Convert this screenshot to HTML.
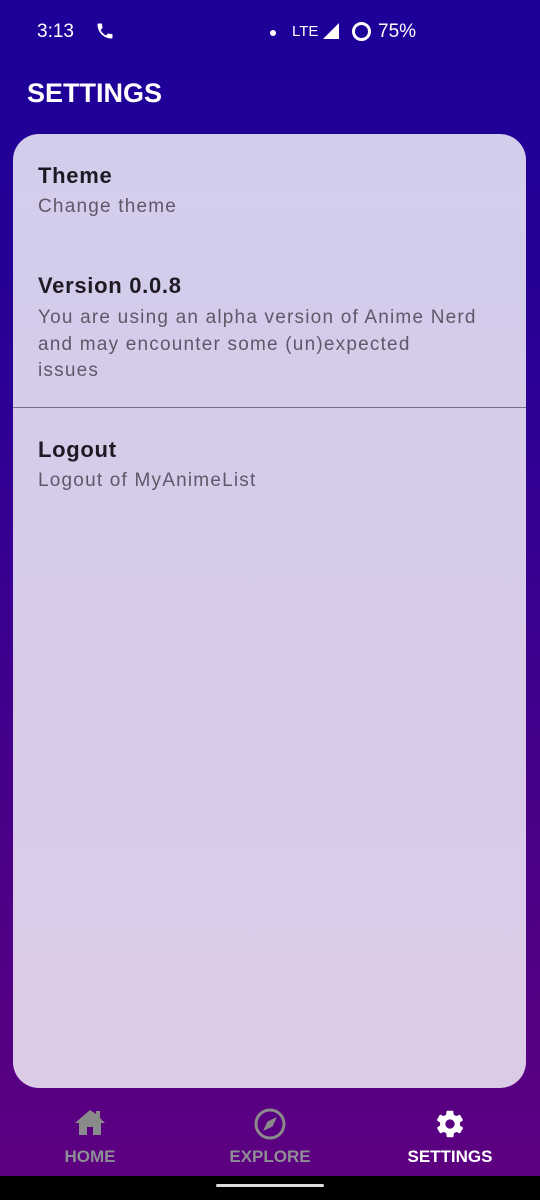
<!DOCTYPE html>
<html><head><meta charset="utf-8"><style>
*{margin:0;padding:0;box-sizing:border-box}
body{width:540px;height:1200px;overflow:hidden;font-family:"Liberation Sans",sans-serif;background:linear-gradient(180deg,#1c0098 0%,#2a0096 30%,#4a0088 70%,#5e0080 100%);position:relative}
.sb{position:absolute;top:0;left:0;width:540px;height:62px;color:#fff;font-size:19px}
.t{position:absolute;left:37px;top:21px}
.title{position:absolute;left:27px;top:78px;color:#fff;font-size:27px;font-weight:bold;letter-spacing:0px}
.card{position:absolute;left:13px;top:134px;width:513px;height:954px;border-radius:26px;background:linear-gradient(180deg,#d3cdec 0%,#d8cbe8 60%,#dccbe7 100%);overflow:hidden}
.h{position:absolute;left:25px;font-size:22px;font-weight:bold;color:#1e1a24;letter-spacing:0.7px}
.s{position:absolute;left:25px;font-size:19px;color:#5f5868;line-height:26.5px;letter-spacing:1.2px}
.div{position:absolute;left:0;top:273px;width:513px;height:1px;background:#7a7284}
.nav{position:absolute;top:1088px;left:0;width:540px;height:88px}
.ni{position:absolute;top:0;width:180px;text-align:center}
.nl{position:absolute;top:59px;width:180px;text-align:center;font-size:17px;font-weight:bold}
.bot{position:absolute;top:1176px;left:0;width:540px;height:24px;background:#000}
.pill{position:absolute;left:216px;top:8px;width:108px;height:3px;border-radius:2px;background:#ddd}
</style></head><body>
<div class="sb">
<span class="t">3:13</span>
<svg style="position:absolute;left:95px;top:21px" width="20" height="20" viewBox="0 0 24 24"><path fill="#fff" d="M6.6 10.8c1.4 2.8 3.8 5.1 6.6 6.6l2.2-2.2c.3-.3.7-.4 1-.2 1.1.4 2.300.6 3.6.6.6 0 1 .4 1 1V20c0 .6-.4 1-1 1C10.6 21 3 13.4 3 4c0-.6.4-1 1-1h3.5c.6 0 1 .4 1 1 0 1.3.2 2.5.6 3.6.1.3 0 .7-.2 1L6.6 10.8z"/></svg>
<span style="position:absolute;left:270px;top:30px;width:6px;height:6px;border-radius:3px;background:#fff"></span>
<span style="position:absolute;left:292px;top:23px;font-size:15px">LTE</span>
<svg style="position:absolute;left:322px;top:22px" width="18" height="18" viewBox="0 0 18 18"><path fill="#fff" d="M17 1V17H1Z"/></svg>
<span style="position:absolute;left:352px;top:22px;width:19px;height:19px;border-radius:50%;border:3px solid #fff"></span>
<span style="position:absolute;left:378px;top:21px">75%</span>
</div>
<div class="title">SETTINGS</div>
<div class="card">
<div class="h" style="top:29px">Theme</div>
<div class="s" style="top:60px">Change theme</div>
<div class="h" style="top:139px">Version 0.0.8</div>
<div class="s" style="top:171px;width:470px">You are using an alpha version of Anime Nerd<br>and may encounter some (un)expected<br>issues</div>
<div class="div"></div>
<div class="h" style="top:303px">Logout</div>
<div class="s" style="top:334px">Logout of MyAnimeList</div>
</div>
<div class="nav">
<div class="ni" style="left:0"><svg style="margin-top:20px" width="32" height="28" viewBox="0 0 32 28"><path fill="#8a8a8a" d="M16 2L1 15h4v12h8v-8h6v8h8V15h4L26 10V3h-4v3z"/></svg></div>
<div class="nl" style="left:0;color:#8e8e95">HOME</div>
<div class="ni" style="left:180px"><svg style="margin-top:19px" width="34" height="34" viewBox="0 0 34 34"><circle cx="17" cy="17" r="14" fill="none" stroke="#8a8a8a" stroke-width="3"/><path fill="#8a8a8a" d="M24 10L19.5 19.5 10 24 14.5 14.5z"/></svg></div>
<div class="nl" style="left:180px;color:#8e8e95">EXPLORE</div>
<div class="ni" style="left:360px"><svg style="margin-top:20px" width="32" height="32" viewBox="0 0 24 24"><path fill="#fff" d="M19.4 13c.04-.3.06-.7.06-1s-.02-.7-.06-1l2.1-1.6c.2-.15.25-.4.12-.6l-2-3.5c-.12-.2-.38-.3-.6-.2l-2.5 1c-.5-.4-1.1-.7-1.700-1l-.4-2.6c0-.25-.2-.4-.5-.4h-4c-.25 0-.45.15-.5.4l-.4 2.6c-.6.25-1.2.6-1.7 1l-2.5-1c-.2-.1-.5 0-.6.2l-2 3.5c-.13.2-.07.45.12.6L4.6 11c-.04.3-.07.7-.07 1s.02.7.06 1l-2.1 1.6c-.2.15-.25.4-.12.6l2 3.5c.12.2.38.3.6.2l2.5-1c.5.4 1.1.7 1.7 1l.4 2.6c.05.25.25.4.5.4h4c.25 0 .45-.15.5-.4l.4-2.6c.6-.25 1.2-.6 1.7-1l2.5 1c.2.1.5 0 .6-.2l2-3.5c.13-.2.07-.45-.12-.6L19.4 13zM12 15.5A3.5 3.5 0 1 1 12 8.5a3.5 3.5 0 0 1 0 7z"/></svg></div>
<div class="nl" style="left:360px;color:#fff">SETTINGS</div>
</div>
<div class="bot"><div class="pill"></div></div>
</body></html>
